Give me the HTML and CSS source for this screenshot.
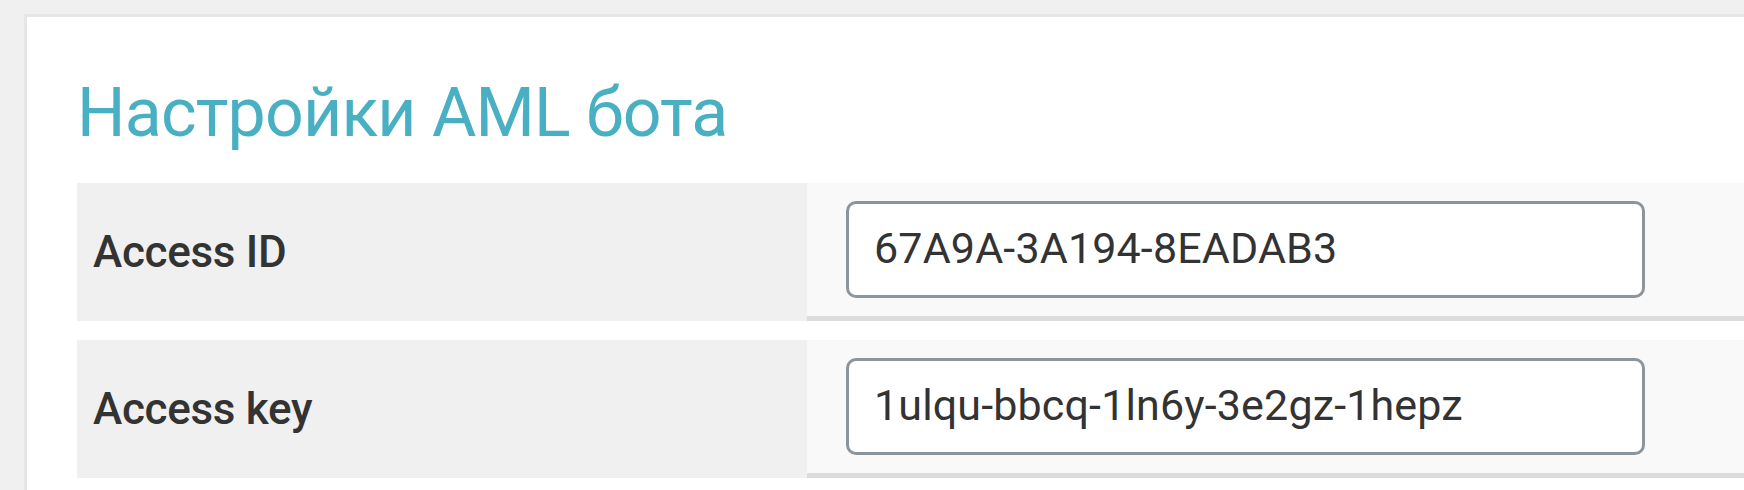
FILE: index.html
```html
<!DOCTYPE html>
<html lang="ru">
<head>
<meta charset="utf-8">
<title>Настройки AML бота</title>
<link rel="stylesheet" href="styles.css">
</head>
<body>
<div class="page">
  <section class="card">
    <h1 class="title">Настройки AML бота</h1>
    <div class="rows">
      <div class="row">
        <div class="label">Access ID</div>
        <div class="value"><input class="field" type="text" value="67A9A-3A194-8EADAB3"></div>
      </div>
      <div class="row">
        <div class="label">Access key</div>
        <div class="value"><input class="field" type="text" value="1ulqu-bbcq-1ln6y-3e2gz-1hepz"></div>
      </div>
    </div>
  </section>
</div>
</body>
</html>
```

FILE: styles.css
```css
html, body {
  margin: 0;
  padding: 0;
}
body {
  background: #f0f0f0;
  font-family: Roboto, "Noto Sans", sans-serif;
  overflow: hidden;
  height: 490px;
}
.page {
  padding: 14px 0 0 24px;
}
.card {
  background: #ffffff;
  border: 3px solid #e6e6e6;
  border-right: none;
  margin-right: -80px;
  padding: 57px 0 40px 50px;
}
.title {
  margin: 0 0 31px 0;
  font-size: 68px;
  line-height: 78px;
  letter-spacing: -0.8px;
  font-weight: 400;
  color: #48b0c2;
}
.rows {
  display: flex;
  flex-direction: column;
  gap: 19px;
}
.row {
  display: grid;
  grid-template-columns: 730px 1fr;
}
.label {
  background: #f0f0f0;
  display: flex;
  align-items: center;
  padding-left: 16px;
  font-size: 44px;
  letter-spacing: -0.3px;
  font-weight: 500;
  color: #333333;
}
.value {
  background: #f9f9f9;
  padding: 18px 0 18px 39px;
  border-bottom: 5px solid #dcdcdc;
}
.field {
  display: block;
  box-sizing: border-box;
  width: 799px;
  height: 97px;
  margin: 0;
  border: 3px solid #8d959c;
  border-radius: 10px;
  background: #ffffff;
  padding: 0 0 4px 25px;
  font-family: Roboto, "Noto Sans", sans-serif;
  font-size: 43px;
  letter-spacing: 0.15px;
  color: #333333;
  outline: none;
}
```
